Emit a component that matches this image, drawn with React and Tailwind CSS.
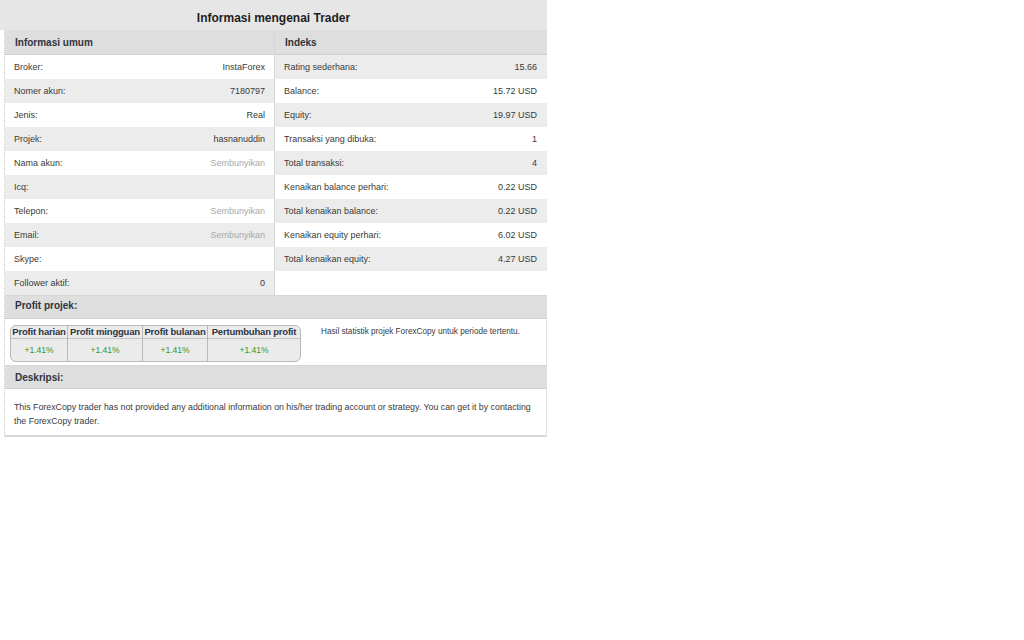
import React from "react";

const umum = [
  { label: "Broker:", value: "InstaForex" },
  { label: "Nomer akun:", value: "7180797" },
  { label: "Jenis:", value: "Real" },
  { label: "Projek:", value: "hasnanuddin" },
  { label: "Nama akun:", value: "Sembunyikan", muted: true },
  { label: "Icq:", value: "" },
  { label: "Telepon:", value: "Sembunyikan", muted: true },
  { label: "Email:", value: "Sembunyikan", muted: true },
  { label: "Skype:", value: "" },
  { label: "Follower aktif:", value: "0" },
];

const indeks = [
  { label: "Rating sederhana:", value: "15.66" },
  { label: "Balance:", value: "15.72 USD" },
  { label: "Equity:", value: "19.97 USD" },
  { label: "Transaksi yang dibuka:", value: "1" },
  { label: "Total transaksi:", value: "4" },
  { label: "Kenaikan balance perhari:", value: "0.22 USD" },
  { label: "Total kenaikan balance:", value: "0.22 USD" },
  { label: "Kenaikan equity perhari:", value: "6.02 USD" },
  { label: "Total kenaikan equity:", value: "4.27 USD" },
];

const profit = [
  { head: "Profit harian", value: "+1.41%", w: "w-[57px]" },
  { head: "Profit mingguan", value: "+1.41%", w: "w-[75px]" },
  { head: "Profit bulanan", value: "+1.41%", w: "w-[65px]" },
  { head: "Pertumbuhan profit", value: "+1.41%", w: "flex-1" },
];

function Row({ item, shaded, pad }) {
  return (
    <div
      className={`h-6 flex items-center justify-between pt-[2px] ${pad} ${
        shaded ? "bg-[#ececec]" : "bg-white"
      }`}
    >
      <span className="text-[#3a3a3a]">{item.label}</span>
      <span className={item.muted ? "text-[#a8a8a8]" : "text-[#3a3a3a]"}>{item.value}</span>
    </div>
  );
}

function SectionHead({ children, className = "h-6" }) {
  return (
    <div
      className={`flex items-center pl-[10px] bg-[#dedede] border-b border-[#d0d0d0] font-bold text-[10px] text-[#2e3440] ${className}`}
    >
      {children}
    </div>
  );
}

export default function App() {
  return (
    <div className="w-[1024px] h-[640px] bg-white font-['Liberation_Sans',Arial,sans-serif] text-[9px]">
      <div className="w-[547px]">
        <div className="h-[30px] bg-[#e6e6e6] flex items-center justify-center pt-[6px] font-bold text-[12px] text-[#1e1e1e]">
          Informasi mengenai Trader
        </div>

        <div className="ml-[4px] border-l border-dotted border-[#c8c8c8]">
          <div className="flex">
            <div className="w-[270px] border-r border-[#d6d6d6]">
              <SectionHead className="h-[25px] pt-[1px]">Informasi umum</SectionHead>
              {umum.map((item, i) => (
                <Row key={item.label} item={item} shaded={i % 2 === 1} pad="pl-[9px] pr-[9px]" />
              ))}
            </div>
            <div className="flex-1">
              <SectionHead className="h-[25px] pt-[1px]">Indeks</SectionHead>
              {indeks.map((item, i) => (
                <Row key={item.label} item={item} shaded={i % 2 === 0} pad="pl-[9px] pr-[10px]" />
              ))}
              <div className="h-6 bg-white" />
            </div>
          </div>

          <SectionHead className="h-6 pb-[3px] border-t border-t-[#d6d6d6]">Profit projek:</SectionHead>
          <div className="h-[46px] flex items-start bg-white border-r border-[#e2e2e2]">
            <div className="mt-[6px] ml-[5px] w-[291px] h-[37px] rounded-[6px] border border-[#b8b8b8] bg-[#ebebeb] overflow-hidden flex">
              {profit.map((p, i) => (
                <div
                  key={p.head}
                  className={`${p.w} flex flex-col ${i < profit.length - 1 ? "border-r border-[#b8b8b8]" : ""}`}
                >
                  <div className="h-[13px] flex items-center justify-center pt-[1px] font-bold text-[9.5px] tracking-[-0.2px] text-[#2e3440] whitespace-nowrap border-b border-[#c4c4c4]">
                    {p.head}
                  </div>
                  <div className="flex-1 flex items-center justify-center text-[8.5px] text-[#2e9a2e]">
                    {p.value}
                  </div>
                </div>
              ))}
            </div>
            <div className="ml-[20px] mt-[7px] text-[8.2px] text-[#3a3a3a]">
              Hasil statistik projek ForexCopy untuk periode tertentu.
            </div>
          </div>

          <SectionHead className="h-6 border-t border-t-[#d6d6d6]">Deskripsi:</SectionHead>
          <div className="bg-white pl-[9px] pr-[10px] pt-[11px] pb-[7px] leading-[14px] text-[8.8px] text-[#3a3a3a] border-b-2 border-[#d8d8d8] border-r border-r-[#e2e2e2]">
            This ForexCopy trader has not provided any additional information on his/her trading account or strategy. You can get it by contacting the ForexCopy trader.
          </div>
        </div>
      </div>
    </div>
  );
}
